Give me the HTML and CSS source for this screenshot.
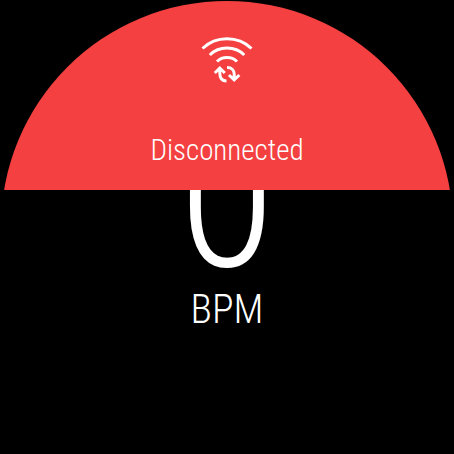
FILE: index.html
```html
<!DOCTYPE html>
<html lang="en">
<head>
<meta charset="utf-8">
<title>Heart rate</title>
<link rel="stylesheet" href="styles.css">
</head>
<body>
<main class="watch">
  <section class="reading">
    <p class="value">0</p>
    <p class="unit">BPM</p>
  </section>
  <section class="banner" role="status">
    <svg class="banner-icon" viewBox="0 0 54 50" fill="none" stroke="#fff" stroke-width="3" aria-hidden="true">
      <path d="M2.500 12.500C16-.5 38-.5 51.500 12.500M9.800 19C19 9.700 35 9.700 44.300 19M17 25.500C22.500 20.300 31.500 20.300 37 25.500"/>
      <path d="M14.800 37L19.800 32L24.800 37M19.800 32V37C19.800 42 22 45 26.500 45M27 31.500C32 31.500 34.200 34.500 34.200 38V44M29 39L34.200 44L39.300 39"/>
    </svg>
    <p class="banner-text">Disconnected</p>
  </section>
</main>
</body>
</html>
```
FILE: styles.css
```css
* { box-sizing: border-box; }
body { margin: 0; background: #000; color: #fff; font-family: "Roboto Condensed", Roboto, sans-serif; font-weight: 300; }
p { margin: 0; }
.watch { position: relative; margin: 1px; aspect-ratio: 1; border-radius: 50%; overflow: hidden; text-align: center; background: #000; }
.reading { padding-top: 109px; }
.banner { position: absolute; top: 0; left: 0; right: 0; display: flex; flex-direction: column; align-items: center; height: 189px; padding-top: 35px; background: #f44040; }
.banner-icon { width: 54px; height: 50px; }
.banner-text { margin-top: 48px; font-size: 29px; line-height: 32px; color: #fff; }
.value { font-size: 200px; line-height: 176px; }
.unit { font-size: 40px; line-height: 48px; }
```
